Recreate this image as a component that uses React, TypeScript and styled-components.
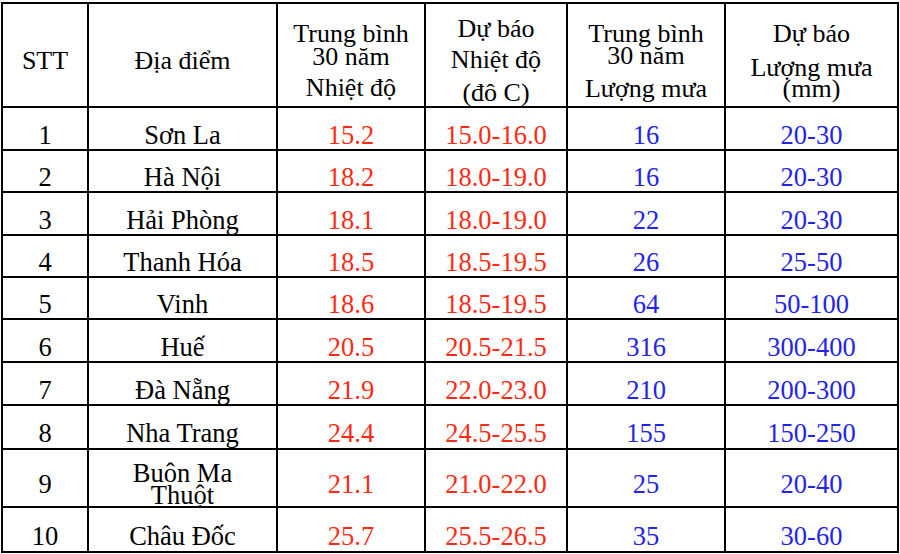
import React from "react";
import styled, { createGlobalStyle } from "styled-components";

type Tone = "red" | "blue";

interface HeadCol {
  lines: string[];
  gaps: number[];
}

interface Station {
  name: string[];
  tempAvg: string;
  tempForecast: string;
  rainAvg: string;
  rainForecast: string;
  h: number;
}

const serif = `"Liberation Serif", "Times New Roman", Times, serif`;

const GlobalStyle = createGlobalStyle`
  html, body {
    margin: 0;
    padding: 0;
    background: #fff;
    font-family: ${serif};
  }
`;

// cột tiêu đề: từng dòng với khoảng cách baseline riêng
const headCols: HeadCol[] = [
  { lines: ["STT"], gaps: [] },
  { lines: ["Địa điểm"], gaps: [] },
  { lines: ["Trung bình", "30 năm", "Nhiệt độ"], gaps: [23, 31] },
  { lines: ["Dự báo", "Nhiệt độ", "(đô C)"], gaps: [31, 33] },
  { lines: ["Trung bình", "30 năm", "Lượng mưa"], gaps: [22, 33] },
  { lines: ["Dự báo", "Lượng mưa", "(mm)"], gaps: [34, 21] },
];

const colWidths = [86, 189, 148, 142, 158, 173];

const stations: Station[] = [
  { name: ["Sơn La"], tempAvg: "15.2", tempForecast: "15.0-16.0", rainAvg: "16", rainForecast: "20-30", h: 43 },
  { name: ["Hà Nội"], tempAvg: "18.2", tempForecast: "18.0-19.0", rainAvg: "16", rainForecast: "20-30", h: 42 },
  { name: ["Hải Phòng"], tempAvg: "18.1", tempForecast: "18.0-19.0", rainAvg: "22", rainForecast: "20-30", h: 43 },
  { name: ["Thanh Hóa"], tempAvg: "18.5", tempForecast: "18.5-19.5", rainAvg: "26", rainForecast: "25-50", h: 42 },
  { name: ["Vinh"], tempAvg: "18.6", tempForecast: "18.5-19.5", rainAvg: "64", rainForecast: "50-100", h: 42 },
  { name: ["Huế"], tempAvg: "20.5", tempForecast: "20.5-21.5", rainAvg: "316", rainForecast: "300-400", h: 43 },
  { name: ["Đà Nẵng"], tempAvg: "21.9", tempForecast: "22.0-23.0", rainAvg: "210", rainForecast: "200-300", h: 43 },
  { name: ["Nha Trang"], tempAvg: "24.4", tempForecast: "24.5-25.5", rainAvg: "155", rainForecast: "150-250", h: 44 },
  { name: ["Buôn Ma", "Thuột"], tempAvg: "21.1", tempForecast: "21.0-22.0", rainAvg: "25", rainForecast: "20-40", h: 58 },
  { name: ["Châu Đốc"], tempAvg: "25.7", tempForecast: "25.5-26.5", rainAvg: "35", rainForecast: "30-60", h: 45 },
];

const toneColor = (t?: Tone) =>
  t === "red" ? "#ff2a14" : t === "blue" ? "#2424e8" : "#000";

const Table = styled.table`
  border-collapse: collapse;
  table-layout: fixed;
  width: 896px;
  margin: 2px 0 0 1px;
  font-family: ${serif};
  color: #000;
`;

const Row = styled.tr<{ $h: number }>`
  height: ${(p) => p.$h}px;
`;

const HeadCell = styled.th`
  border: 2px solid #000;
  padding: 12px 0 0;
  vertical-align: middle;
  text-align: center;
  font-family: ${serif};
  font-weight: normal;
  font-size: 26px;
`;

const HeadLine = styled.span<{ $gap: number }>`
  display: block;
  line-height: 24px;
  margin-top: ${(p) => p.$gap - 24}px;
  white-space: nowrap;
`;

const Cell = styled.td<{ $tone?: Tone }>`
  border: 2px solid #000;
  padding: 12px 0 0;
  vertical-align: middle;
  text-align: center;
  font-family: ${serif};
  font-size: 26.5px;
  line-height: 28px;
  color: ${(p) => toneColor(p.$tone)};
  white-space: nowrap;
`;

const NameLines = styled.span<{ $multi: boolean }>`
  display: block;
  line-height: ${(p) => (p.$multi ? "22px" : "28px")};
`;

function App() {
  return (
    <>
      <GlobalStyle />
      <Table>
        <colgroup>
          {colWidths.map((w, i) => (
            <col key={i} style={{ width: w }} />
          ))}
        </colgroup>
        <thead>
          <Row $h={104}>
            {headCols.map((c, i) => (
              <HeadCell key={i}>
                {c.lines.map((l, j) => (
                  <HeadLine key={j} $gap={j === 0 ? 24 : c.gaps[j - 1]}>
                    {l}
                  </HeadLine>
                ))}
              </HeadCell>
            ))}
          </Row>
        </thead>
        <tbody>
          {stations.map((s, i) => (
            <Row key={i} $h={s.h}>
              <Cell>{i + 1}</Cell>
              <Cell>
                <NameLines $multi={s.name.length > 1}>
                  {s.name.map((n, j) => (
                    <React.Fragment key={j}>
                      {j > 0 && <br />}
                      {n}
                    </React.Fragment>
                  ))}
                </NameLines>
              </Cell>
              <Cell $tone="red">{s.tempAvg}</Cell>
              <Cell $tone="red">{s.tempForecast}</Cell>
              <Cell $tone="blue">{s.rainAvg}</Cell>
              <Cell $tone="blue">{s.rainForecast}</Cell>
            </Row>
          ))}
        </tbody>
      </Table>
    </>
  );
}

export default App;
